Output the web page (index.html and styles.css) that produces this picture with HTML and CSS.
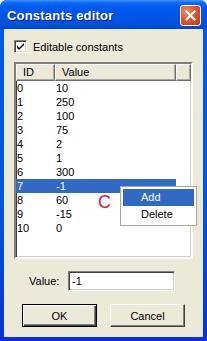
FILE: index.html
```html
<!DOCTYPE html>
<html>
<head>
<meta charset="utf-8">
<link rel="stylesheet" href="styles.css">
</head>
<body>
<div class="window">
  <div class="titlebar">
    <span class="title">Constants editor</span>
    <span class="close">
      <svg width="11" height="11" viewBox="0 0 11 11"><path d="M1.5 1.5 L9.5 9.5 M9.5 1.5 L1.5 9.5" stroke="#fff" stroke-width="2.2" stroke-linecap="square"/></svg>
    </span>
  </div>
  <div class="client">
    <div class="check">
      <span class="box"><svg width="7" height="7" viewBox="0 0 7 7"><path d="M0 2 L0 5 L2 7 L7 2 L7 0 L2 5 Z" fill="#000"/></svg></span>
      <span>Editable constants</span>
    </div>
    <div class="list">
      <div class="header">
        <div class="hcol c-id">ID</div>
        <div class="hcol c-val">Value</div>
        <div class="hcol c-rest"></div>
      </div>
      <div class="row"><span class="c-id">0</span><span class="c-val">10</span></div>
      <div class="row"><span class="c-id">1</span><span class="c-val">250</span></div>
      <div class="row"><span class="c-id">2</span><span class="c-val">100</span></div>
      <div class="row"><span class="c-id">3</span><span class="c-val">75</span></div>
      <div class="row"><span class="c-id">4</span><span class="c-val">2</span></div>
      <div class="row"><span class="c-id">5</span><span class="c-val">1</span></div>
      <div class="row"><span class="c-id">6</span><span class="c-val">300</span></div>
      <div class="row sel"><span class="c-id">7</span><span class="c-val">-1</span></div>
      <div class="row"><span class="c-id">8</span><span class="c-val">60</span></div>
      <div class="row"><span class="c-id">9</span><span class="c-val">-15</span></div>
      <div class="row"><span class="c-id">10</span><span class="c-val">0</span></div>
    </div>
    <div class="value-row">
      <span class="value-label">Value:</span>
      <div class="input">-1</div>
    </div>
    <div class="buttons">
      <div class="btn default"><span>OK</span></div>
      <div class="btn"><span>Cancel</span></div>
    </div>
    <div class="menu">
      <div class="mitem active">Add</div>
      <div class="mitem">Delete</div>
    </div>
    <div class="cursor">C</div>
  </div>
</div>
</body>
</html>
```
FILE: styles.css
```css
html, body {
  margin: 0;
  padding: 0;
  background: #fff;
}
.window {
  width: 207px;
  height: 341px;
  display: flex;
  flex-direction: column;
  background: linear-gradient(to bottom, #0058EE 0%, #0055E5 60%, #0831D9 100%);
  border-radius: 7px 7px 0 0;
  overflow: hidden;
  font-family: "Liberation Sans", Arial, sans-serif;
  font-size: 11px;
  color: #000;
}
.titlebar {
  height: 29px;
  flex: none;
  display: flex;
  align-items: center;
  justify-content: space-between;
  padding: 0 6px 0 7px;
  background: linear-gradient(to bottom, #3D95FF 0px, #0A66F5 3px, #0058EE 8px, #0054E3 20px, #0050DC 26px, #0043CF 29px);
}
.title {
  color: #fff;
  font-weight: bold;
  font-size: 13px;
  letter-spacing: 0.2px;
  text-shadow: 1px 1px 0 #0A1883;
  margin-top: 1px;
}
.close {
  width: 19px;
  height: 19px;
  border: 1px solid #fff;
  border-radius: 3px;
  background: radial-gradient(circle at 30% 30%, #F08B6E 0%, #E0552F 45%, #C2391B 100%);
  display: flex;
  align-items: center;
  justify-content: center;
  margin-top: 1px;
}
.client {
  position: relative;
  flex: 1;
  margin: 0 4px 4px 4px;
  background: #ECE9D8;
  padding: 11px 10px 0 10px;
  display: flex;
  flex-direction: column;
}
.check {
  display: flex;
  align-items: center;
  gap: 6px;
  height: 13px;
}
.box {
  width: 9px;
  height: 9px;
  background: #fff;
  border-top: 1px solid #808080;
  border-left: 1px solid #808080;
  border-right: 1px solid #fff;
  border-bottom: 1px solid #fff;
  box-shadow: inset 1px 1px 0 #404040, inset -1px -1px 0 #D4D0C8;
  padding: 1px;
  display: flex;
  align-items: center;
  justify-content: center;
}
.list {
  margin-top: 9px;
  height: 193px;
  background: #fff;
  border-top: 2px solid #808080;
  border-left: 2px solid #808080;
  border-right: 2px solid #fff;
  border-bottom: 2px solid #fff;
  box-shadow: inset 1px 1px 0 #404040, inset -1px -1px 0 #D4D0C8;
}
.header {
  display: flex;
  height: 17px;
}
.hcol {
  box-sizing: border-box;
  height: 17px;
  background: #ECE9D8;
  border-top: 1px solid #fff;
  border-left: 1px solid #fff;
  border-right: 1px solid #716F64;
  border-bottom: 1px solid #716F64;
  box-shadow: inset -1px -1px 0 #ACA899;
  padding-left: 6px;
  line-height: 15px;
}
.c-id { width: 39px; flex: none; box-sizing: border-box; }
.c-val { width: 121px; flex: none; box-sizing: border-box; }
.c-rest { flex: 1; }
.row {
  display: flex;
  height: 14px;
  line-height: 14px;
  width: 160px;
}
.row .c-id { padding-left: 1px; }
.row .c-val { padding-left: 1px; }
.row.sel {
  background: #316AC5;
  color: #fff;
}
.value-row {
  display: flex;
  align-items: center;
  margin-top: 12px;
  padding-left: 15px;
}
.value-label {
  width: 39px;
}
.input {
  box-sizing: border-box;
  width: 107px;
  height: 20px;
  background: #fff;
  border-top: 1px solid #808080;
  border-left: 1px solid #808080;
  border-right: 1px solid #fff;
  border-bottom: 1px solid #fff;
  box-shadow: inset 1px 1px 0 #404040, inset -1px -1px 0 #D4D0C8;
  padding-left: 3px;
  line-height: 18px;
}
.buttons {
  display: flex;
  gap: 13px;
  margin-top: 13px;
  padding-left: 8px;
}
.btn {
  box-sizing: border-box;
  width: 75px;
  height: 23px;
  background: #ECE9D8;
  border-top: 1px solid #fff;
  border-left: 1px solid #fff;
  border-right: 1px solid #404040;
  border-bottom: 1px solid #404040;
  box-shadow: inset -1px -1px 0 #808080;
  display: flex;
  align-items: center;
  justify-content: center;
}
.btn.default {
  border: 1px solid #000;
  box-shadow: inset 1px 1px 0 #fff, inset -1px -1px 0 #404040, inset -2px -2px 0 #808080;
}
.menu {
  position: absolute;
  left: 116px;
  top: 157px;
  width: 71px;
  background: #fff;
  border: 1px solid #ACA899;
  padding: 2px;
}
.mitem {
  height: 17px;
  line-height: 17px;
  padding-left: 18px;
}
.mitem.active {
  background: #316AC5;
  color: #fff;
}
.cursor {
  position: absolute;
  left: 94px;
  top: 164px;
  color: #F0103C;
  font-size: 18px;
  line-height: 18px;
  font-family: "Liberation Sans", Arial, sans-serif;
}
```
